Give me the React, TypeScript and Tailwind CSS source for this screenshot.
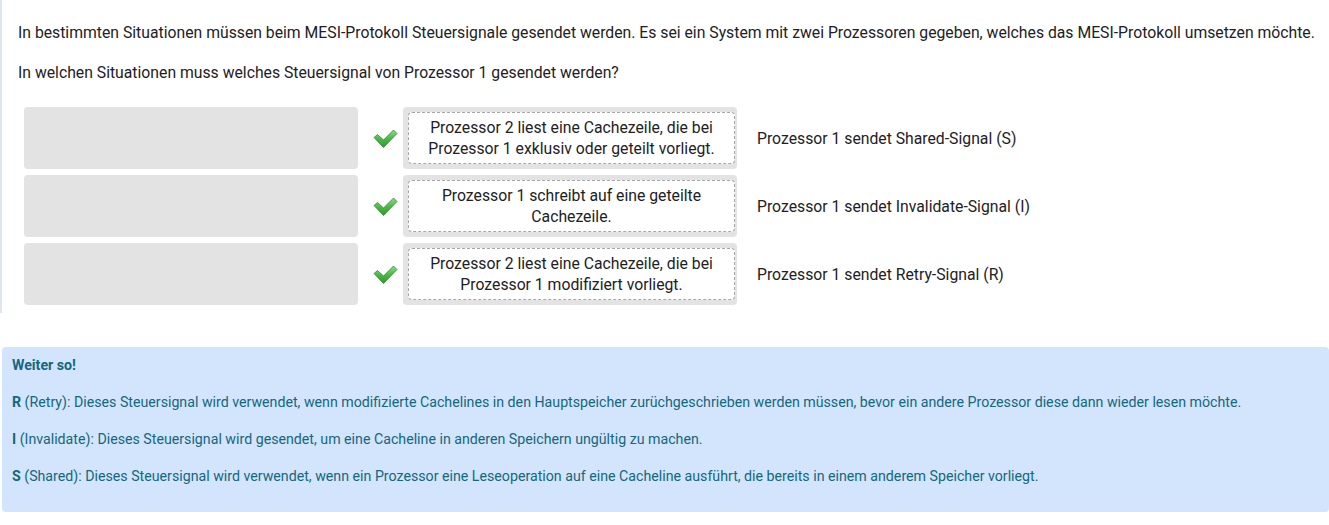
import React from 'react';

const rows = [
  {
    item: 'Prozessor 2 liest eine Cachezeile, die bei Prozessor 1 exklusiv oder geteilt vorliegt.',
    label: 'Prozessor 1 sendet Shared-Signal (S)',
  },
  {
    item: 'Prozessor 1 schreibt auf eine geteilte Cachezeile.',
    label: 'Prozessor 1 sendet Invalidate-Signal (I)',
  },
  {
    item: 'Prozessor 2 liest eine Cachezeile, die bei Prozessor 1 modifiziert vorliegt.',
    label: 'Prozessor 1 sendet Retry-Signal (R)',
  },
];

function Check() {
  return (
    <svg width="25" height="22" viewBox="0 0 25 22">
      <defs>
        <linearGradient id="chk" x1="0" y1="0" x2="0" y2="1">
          <stop offset="0" stopColor="#8fd88a" />
          <stop offset="0.5" stopColor="#4cb848" />
          <stop offset="1" stopColor="#2f9a2c" />
        </linearGradient>
      </defs>
      <path
        d="M1 9.5 L4.5 6.5 L10.5 12 L20.5 2 L24 5.5 L10.5 19.5 Z"
        fill="url(#chk)"
        stroke="#2e8a2b"
        strokeWidth="0.8"
        strokeLinejoin="round"
      />
    </svg>
  );
}

export default function App() {
  return (
    <div className="w-[1329px] h-[525px] bg-white font-['Roboto','Liberation_Sans',sans-serif] text-[#1d2125]">
      <div className="border-l-2 border-[#dee6f2] pl-[16px] pt-[22px] pb-[8px]">
        <p className="text-[15.75px] leading-[22px]">
          In bestimmten Situationen müssen beim MESI-Protokoll Steuersignale gesendet werden. Es sei ein System mit zwei Prozessoren gegeben, welches das MESI-Protokoll umsetzen möchte.
        </p>
        <p className="text-[15.75px] leading-[22px] mt-[18px]">
          In welchen Situationen muss welches Steuersignal von Prozessor 1 gesendet werden?
        </p>
        <div className="mt-[23px] ml-[6px] flex flex-col gap-[6px]">
          {rows.map((r, i) => (
            <div key={i} className="flex items-center h-[62px]">
              <div className="w-[334px] h-full rounded-[4px] bg-[#e3e3e3]" />
              <div className="w-[45px] flex justify-start pl-[15px] pt-[2px]">
                <Check />
              </div>
              <div className="w-[334px] h-full rounded-[4px] bg-[#e3e3e3] p-[5px] pr-[2px]">
                <div className="h-full rounded-[4px] border border-dashed border-[#a6a6a6] bg-white flex items-center justify-center text-center text-[15.75px] leading-[21px] px-[6px]">
                  {r.item}
                </div>
              </div>
              <div className="pl-[20px] text-[15.75px] pt-[2px]">{r.label}</div>
            </div>
          ))}
        </div>
      </div>
      <div className="mt-[34px] ml-[2px] rounded-[4px] bg-[#d3e5fd] text-[#13677f] text-[14.2px] leading-[20px] px-[10px] pt-[8px] pb-[26px]">
        <p className="font-bold">Weiter so!</p>
        <p className="mt-[17px]">
          <b>R</b> (Retry): Dieses Steuersignal wird verwendet, wenn modifizierte Cachelines in den Hauptspeicher zurüchgeschrieben werden müssen, bevor ein andere Prozessor diese dann wieder lesen möchte.
        </p>
        <p className="mt-[17px]">
          <b>I</b> (Invalidate): Dieses Steuersignal wird gesendet, um eine Cacheline in anderen Speichern ungültig zu machen.
        </p>
        <p className="mt-[17px]">
          <b>S</b> (Shared): Dieses Steuersignal wird verwendet, wenn ein Prozessor eine Leseoperation auf eine Cacheline ausführt, die bereits in einem anderem Speicher vorliegt.
        </p>
      </div>
    </div>
  );
}
